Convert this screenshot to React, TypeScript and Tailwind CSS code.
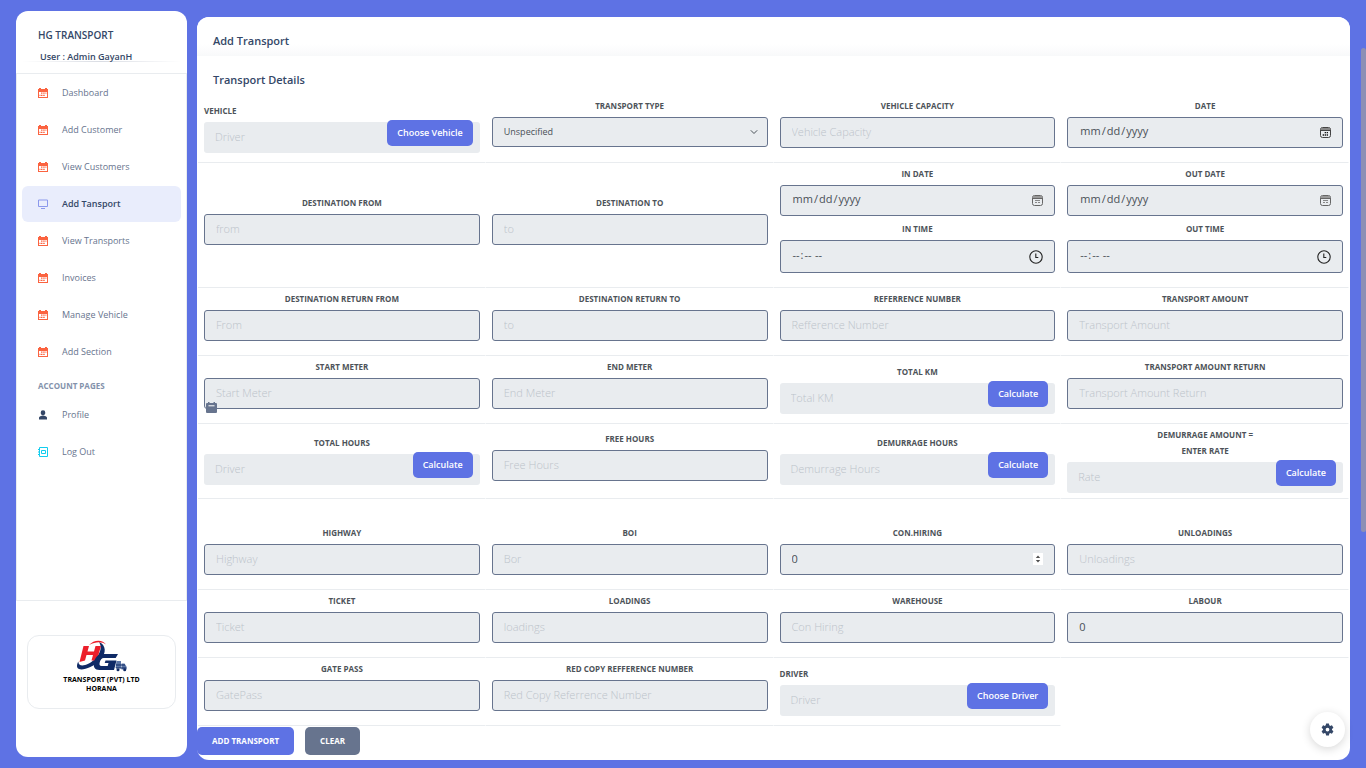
import { useState, type ReactNode } from 'react';

type NavIconName = 'calendar' | 'screen' | 'person' | 'book';

const navItems: { label: string; icon: NavIconName; active?: boolean }[] = [
  { label: 'Dashboard', icon: 'calendar' },
  { label: 'Add Customer', icon: 'calendar' },
  { label: 'View Customers', icon: 'calendar' },
  { label: 'Add Tansport', icon: 'screen', active: true },
  { label: 'View Transports', icon: 'calendar' },
  { label: 'Invoices', icon: 'calendar' },
  { label: 'Manage Vehicle', icon: 'calendar' },
  { label: 'Add Section', icon: 'calendar' },
];

const accountItems: { label: string; icon: NavIconName }[] = [
  { label: 'Profile', icon: 'person' },
  { label: 'Log Out', icon: 'book' },
];

const fieldClass =
  'block w-full rounded-[3px] bg-[#e9ecef] px-[11px] pb-0.5 text-[11px] text-[#495057] placeholder:font-light placeholder:text-[#bcc3ca] outline-none';
const boxClass = 'border border-[#67748e]';

function NavIcon({ name }: { name: NavIconName }) {
  if (name === 'screen') {
    return (
      <svg viewBox="0 0 10 10" className="size-[10px]" fill="none" stroke="#8b98ec">
        <path d="M.5 1h9v6.5h-9z" />
        <path d="M3 9.5h4" />
      </svg>
    );
  }
  if (name === 'person') {
    return (
      <svg viewBox="0 0 10 10" className="size-[10px]" fill="#344767">
        <path d="M5 .3a2.3 2.3 0 0 1 2.3 2.4C7.3 4.2 6.4 5.3 5 5.3S2.7 4.2 2.7 2.7A2.3 2.3 0 0 1 5 .3zM1 9.5V7.8C1 6.5 2.5 6 4 5.7h2c1.5.3 3 .8 3 2.1v1.700z" />
      </svg>
    );
  }
  if (name === 'book') {
    return (
      <svg viewBox="0 0 10 10" className="size-[10px]" fill="none" stroke="#11cdef">
        <path d="M1.5.5h8v9h-8z" />
        <path d="M3.5 3.5h4v3h-4z" />
        <path d="M0 2.5h1.5M0 5h1.5M0 7.5h1.5" />
      </svg>
    );
  }
  return (
    <svg viewBox="0 0 10 10" className="size-[10px]">
      <path d="M0 1h1V0h2v1h4V0h2v1h1v9H0z" fill="#fb6340" />
      <path d="M1 4h8v5H1z" fill="#fff" />
      <path d="M3 4.5h1.5v1.2H3zM5.2 4.5h1.5v1.2H5.2zM7.4 4.5h1v1.2h-1zM1.5 6.8h1v1.2h-1zM3 6.8h1.5v1.2H3zM5.2 6.8h1.5v1.2H5.2z" fill="#fb6340" />
    </svg>
  );
}

function DateIcon({ dark }: { dark?: boolean }) {
  return (
    <svg viewBox="0 0 11 11" className="size-[11px]" fill="none" stroke={dark ? '#444' : '#666'}>
      <rect x=".5" y=".5" width="10" height="10" rx="2" />
      <path d="M1 2h9" stroke={dark ? '#888' : '#999'} strokeWidth="2" />
      <path d="M1 3.5h9" />
      {dark ? (
        <path d="M4.7 5.7h1.2M6.7 5.7h1.2M2.7 8h1.2M4.7 8h1.2M6.7 8h1.2" stroke="#000" strokeWidth="1.3" />
      ) : (
        <path d="M3 5.5h5M3 7.5h2M6 7.5h2" stroke="#888" />
      )}
    </svg>
  );
}

function ClockIcon() {
  return (
    <svg viewBox="0 0 14 14" className="size-[14px]" fill="none" stroke="#222" strokeWidth="1.100">
      <circle cx="7" cy="7" r="6.2" />
      <path d="M6.8 3.5V7.5h2.5" />
    </svg>
  );
}

function Logo() {
  return (
    <svg viewBox="0 0 52 32" className="h-8 w-[52px]">
      <path d="M23 2c7 3 8 11 1 18C17 27.5 7 30.5 3 29c-2.5-1-2.5-4-.7-7.5 0 4.5 4.5 5 10 2.3C21 19.5 28 9.5 23 2z" fill="#0f2a66" />
      <path d="M7.5 6h5.5l-1.5 5.5h6.500L19.500 6H25l-4.2 14.5h-5.3l1.5-5.5h-6.5L9 20.5 3.500 22z" fill="#ec1f2b" />
      <path d="M13 5C18-.8 27-.5 30 4.5c-4-3-10-3.2-17 .5z" fill="#ec1f2b" />
      <path d="M42 14H26c-4 0-7 4-8 8-1 4.5.5 8 5.500 8H38l2.500-9.500H29.500L28.700 23h3.800l-.8 3h-6.200c-2 0-2.300-1.500-1.800-3.500.6-2.500 2-4.500 4-4.500h12z" fill="#0f2a66" />
      <path d="M40.5 21h4.500v7h-5.500zM45.500 23.500h3l2 3v3h-5z" fill="#5c76a6" />
      <path d="M40 25h9M40 28h10.500" stroke="#0f2a66" />
      <circle cx="42" cy="29.7" r="1.5" fill="#0f2a66" />
      <circle cx="48.7" cy="29.7" r="1.5" fill="#0f2a66" />
    </svg>
  );
}

function NavLink({ label, icon, active }: { label: string; icon: NavIconName; active?: boolean }) {
  return (
    <a
      href="#"
      className={
        active
          ? 'flex h-9 items-center gap-[14px] rounded-md bg-[#e9edfc] px-4 text-[9px] font-semibold text-[#344767]'
          : 'flex h-9 items-center gap-[14px] rounded-md px-4 text-[9px] text-[#67748e]'
      }
    >
      <NavIcon name={icon} />
      {label}
    </a>
  );
}

function Row({ children }: { children: ReactNode }) {
  return <div className="grid grid-cols-4">{children}</div>;
}

function Cell({ children }: { children: ReactNode }) {
  return (
    <div className="flex min-w-0 flex-col justify-center border-r border-b border-r-white border-b-[#e9ecef] pt-[3px] pr-[5px] pb-[2px] pl-[6px]">
      {children}
    </div>
  );
}

function Label({ id, left, children }: { id: string; left?: boolean; children: ReactNode }) {
  return (
    <label
      htmlFor={id}
      className={
        left
          ? 'mb-[3px] block text-[8px] leading-4 font-bold text-[#4d5359] uppercase'
          : 'mb-[3px] block text-center text-[8px] leading-4 font-bold text-[#4d5359] uppercase'
      }
    >
      {children}
    </label>
  );
}

function TextField({ id, label, placeholder, value }: { id: string; label: string; placeholder?: string; value?: string }) {
  return (
    <div className="mb-3">
      <Label id={id}>{label}</Label>
      <input id={id} type="text" placeholder={placeholder} defaultValue={value} className={`${fieldClass} ${boxClass} h-[31px]`} />
    </div>
  );
}

function DateField({ id, label, dark, tight }: { id: string; label: string; dark?: boolean; tight?: boolean }) {
  return (
    <div className={tight ? 'mb-[5px]' : 'mb-3'}>
      <Label id={id}>{label}</Label>
      <div className="relative">
        <input
          id={id}
          type="date"
          className={`${fieldClass} ${boxClass} h-[31px] [&::-webkit-calendar-picker-indicator]:opacity-0`}
        />
        <span className="pointer-events-none absolute inset-y-0 right-3 flex items-center">
          <DateIcon dark={dark} />
        </span>
      </div>
    </div>
  );
}

function TimeField({ id, label }: { id: string; label: string }) {
  return (
    <div className="mb-3">
      <Label id={id}>{label}</Label>
      <div className="relative">
        <input
          id={id}
          type="time"
          className={`${fieldClass} ${boxClass} h-[33px] [&::-webkit-calendar-picker-indicator]:opacity-0`}
        />
        <span className="pointer-events-none absolute inset-y-0 right-3 flex items-center">
          <ClockIcon />
        </span>
      </div>
    </div>
  );
}

// Read-only field with an action button sitting over its right end
function ActionField(props: { id: string; label: ReactNode; placeholder: string; action: string; left?: boolean }) {
  const { id, label, placeholder, action, left } = props;
  return (
    <div className="mb-[3px]">
      <Label id={id} left={left}>{label}</Label>
      <div className="relative">
        <input id={id} type="text" readOnly placeholder={placeholder} className={`${fieldClass} h-[31px]`} />
        <button
          type="button"
          className="absolute -top-0.5 right-[7px] h-[26px] rounded-[5px] bg-[#5e72e4] px-[10px] text-[9px] font-semibold text-white"
        >
          {action}
        </button>
      </div>
    </div>
  );
}

export default function App() {
  const [conHiring, setConHiring] = useState('0');

  return (
    <div className="relative flex h-screen gap-[10px] overflow-hidden bg-[#5e72e4] pr-4 pl-4 font-['Open_Sans',sans-serif]">
      {/* Sidebar */}
      <aside className="mt-[11px] mb-[11px] flex w-[171px] shrink-0 flex-col rounded-xl bg-white">
        <div className="h-[62px] px-[22px] pt-4">
          <h1 className="text-[10px] leading-4 font-semibold text-[#344767]">HG TRANSPORT</h1>
          <p className="mt-1.5 pl-0.5 text-[9px] leading-4 font-semibold text-[#344767]">User : Admin GayanH</p>
          <hr className="-mx-4 -mt-1 h-px border-0 bg-linear-to-r from-transparent via-[#d9dce3] to-transparent" />
        </div>
        <nav className="flex flex-1 flex-col border border-[#e9ecef] px-[5px]">
          <div className="flex flex-col gap-px pt-px">
            {navItems.map((item) => (
              <NavLink key={item.label} {...item} />
            ))}
          </div>
          <h2 className="mt-2 mb-[3px] px-4 text-[8px] leading-4 font-bold text-[#8392ab] uppercase">Account pages</h2>
          <div className="flex flex-col gap-px">
            {accountItems.map((item) => (
              <NavLink key={item.label} {...item} />
            ))}
          </div>
        </nav>
        <div className="h-[156px] px-[11px] pt-[34px]">
          <div className="flex h-[74px] flex-col items-center rounded-xl border border-[#e9ecef] pt-1">
            <Logo />
            <p className="pt-[3px] text-center text-[7px] leading-[9px] font-bold text-black">
              TRANSPORT (PVT) LTD
              <br />
              HORANA
            </p>
          </div>
        </div>
      </aside>

      {/* Main card */}
      <main className="mt-[17px] mb-2 min-w-0 flex-1 rounded-xl bg-white">
        <h2 className="h-[39px] rounded-t-xl bg-linear-to-b from-white from-70% to-[#f8f9fa] px-4 pt-4 text-[11px] leading-4 font-semibold text-[#344767]">
          Add Transport
        </h2>
        <h3 className="h-[39px] px-4 pt-4 text-[11px] leading-4 font-semibold text-[#344767]">Transport Details</h3>

        <form className="px-px" onSubmit={(e) => e.preventDefault()}>
          <Row>
            <Cell>
              <ActionField id="vehicle" label="Vehicle" placeholder="Driver" action="Choose Vehicle" left />
            </Cell>
            <Cell>
              <div className="mb-[13px]">
                <Label id="type">Transport Type</Label>
                <div className="relative">
                  <select id="type" className="block h-[30px] w-full appearance-none rounded-[3px] border border-[#67748e] bg-[#e9ecef] px-[11px] text-[9px] text-[#495057] outline-none">
                    <option>Unspecified</option>
                  </select>
                  <svg viewBox="0 0 8 8" className="pointer-events-none absolute top-[11px] right-[10px] size-2" fill="none" stroke="#495057">
                    <path d="M.8 2.3 4 5.5l3.2-3.2" />
                  </svg>
                </div>
              </div>
            </Cell>
            <Cell>
              <TextField id="capacity" label="Vehicle Capacity" placeholder="Vehicle Capacity" />
            </Cell>
            <Cell>
              <DateField id="date" label="Date" dark />
            </Cell>
          </Row>

          <Row>
            <Cell>
              <TextField id="dest-from" label="Destination From" placeholder="from" />
            </Cell>
            <Cell>
              <TextField id="dest-to" label="Destination To" placeholder="to" />
            </Cell>
            <Cell>
              <DateField id="in-date" label="In Date" tight />
              <TimeField id="in-time" label="In Time" />
            </Cell>
            <Cell>
              <DateField id="out-date" label="Out Date" tight />
              <TimeField id="out-time" label="Out Time" />
            </Cell>
          </Row>

          <Row>
            <Cell>
              <TextField id="return-from" label="Destination Return From" placeholder="From" />
            </Cell>
            <Cell>
              <TextField id="return-to" label="Destination Return To" placeholder="to" />
            </Cell>
            <Cell>
              <TextField id="reference" label="Referrence Number" placeholder="Refference Number" />
            </Cell>
            <Cell>
              <TextField id="amount" label="Transport Amount" placeholder="Transport Amount" />
            </Cell>
          </Row>

          <Row>
            <Cell>
              <div className="relative">
                <TextField id="start-meter" label="Start Meter" placeholder="Start Meter" />
                <svg viewBox="0 0 11 11" className="absolute bottom-2 left-0.5 size-[11px]">
                  <path d="M2 0h1.5v1h4V0H9v1h1q1 0 1 1v8q0 1-1 1H1q-1 0-1-1V2q0-1 1-1h1z" fill="#67748e" />
                  <path d="M2.5 3.8h6" stroke="#fff" />
                </svg>
              </div>
            </Cell>
            <Cell>
              <TextField id="end-meter" label="End Meter" placeholder="End Meter" />
            </Cell>
            <Cell>
              <ActionField id="total-km" label="Total KM" placeholder="Total KM" action="Calculate" />
            </Cell>
            <Cell>
              <TextField id="amount-return" label="Transport Amount Return" placeholder="Transport Amount Return" />
            </Cell>
          </Row>

          <Row>
            <Cell>
              <ActionField id="total-hours" label="Total Hours" placeholder="Driver" action="Calculate" />
            </Cell>
            <Cell>
              <TextField id="free-hours" label="Free Hours" placeholder="Free Hours" />
            </Cell>
            <Cell>
              <ActionField id="demurrage-hours" label="Demurrage Hours" placeholder="Demurrage Hours" action="Calculate" />
            </Cell>
            <Cell>
              <ActionField
                id="rate"
                label={<>Demurrage Amount =<br />Enter Rate</>}
                placeholder="Rate"
                action="Calculate"
              />
            </Cell>
          </Row>

          <div className="pt-[23px]">
            <Row>
              <Cell>
                <TextField id="highway" label="Highway" placeholder="Highway" />
              </Cell>
              <Cell>
                <TextField id="boi" label="BOI" placeholder="Bor" />
              </Cell>
              <Cell>
                <div className="mb-3">
                  <Label id="con-hiring">Con.Hiring</Label>
                  <div className="relative">
                    <input
                      id="con-hiring"
                      type="number"
                      value={conHiring}
                      onChange={(e) => setConHiring(e.target.value)}
                      className={`${fieldClass} ${boxClass} h-[31px] [&::-webkit-inner-spin-button]:appearance-none`}
                    />
                    <svg viewBox="0 0 10 12" className="pointer-events-none absolute top-[9px] right-3 h-3 w-[10px]">
                      <path d="M0 0h10v12H0z" fill="#fff" />
                      <path d="M5 2.5 7.2 5H2.8zM5 9.5 7.2 7H2.8z" fill="#505050" />
                    </svg>
                  </div>
                </div>
              </Cell>
              <Cell>
                <TextField id="unloadings" label="Unloadings" placeholder="Unloadings" />
              </Cell>
            </Row>
          </div>

          <Row>
            <Cell>
              <TextField id="ticket" label="Ticket" placeholder="Ticket" />
            </Cell>
            <Cell>
              <TextField id="loadings" label="Loadings" placeholder="loadings" />
            </Cell>
            <Cell>
              <TextField id="warehouse" label="Warehouse" placeholder="Con Hiring" />
            </Cell>
            <Cell>
              <TextField id="labour" label="Labour" value="0" />
            </Cell>
          </Row>

          <Row>
            <Cell>
              <TextField id="gate-pass" label="Gate Pass" placeholder="GatePass" />
            </Cell>
            <Cell>
              <TextField id="red-copy" label="Red Copy Refference Number" placeholder="Red Copy Referrence Number" />
            </Cell>
            <Cell>
              <ActionField id="driver" label="Driver" placeholder="Driver" action="Choose Driver" left />
            </Cell>
          </Row>

          <div className="-ml-px flex gap-[11px] pt-px">
            <button type="submit" className="h-7 rounded-[5px] bg-[#5e72e4] px-[15px] text-[8px] font-bold text-white uppercase">
              Add Transport
            </button>
            <button type="reset" className="h-7 rounded-[5px] bg-[#67748e] px-[15px] text-[8px] font-bold text-white uppercase">
              Clear
            </button>
          </div>
        </form>
      </main>

      {/* Scroll thumb */}
      <div className="absolute top-12 right-0 h-[484px] w-[5px] rounded-sm bg-[#8c8fb5]" />

      {/* Settings */}
      <button
        type="button"
        aria-label="Settings"
        className="absolute right-[21px] bottom-[21px] flex size-[35px] items-center justify-center rounded-full bg-white shadow-[0_2px_10px_rgba(0,0,0,0.16)]"
      >
        <svg viewBox="0 0 24 24" className="size-[15px]" fill="#344767">
          <path d="M19.14 12.94c.04-.3.06-.61.06-.94 0-.32-.02-.64-.07-.94l2.03-1.58a.49.49 0 0 0 .12-.61l-1.92-3.32a.49.49 0 0 0-.59-.22l-2.39.96a7 7 0 0 0-1.62-.94l-.36-2.54a.48.48 0 0 0-.48-.41h-3.84a.47.47 0 0 0-.47.41l-.36 2.54c-.59.24-1.13.57-1.62.94l-2.39-.96a.47.47 0 0 0-.59.22L2.74 8.87a.47.47 0 0 0 .12.61l2.03 1.58a6 6 0 0 0 0 1.88l-2.03 1.58a.49.49 0 0 0-.12.61l1.92 3.32c.12.22.37.29.59.22l2.39-.96c.5.38 1.03.7 1.62.94l.36 2.54c.05.24.24.41.48.41h3.84c.24 0 .44-.17.47-.41l.36-2.54c.59-.24 1.13-.56 1.62-.94l2.39.96c.22.08.47 0 .59-.22l1.92-3.32a.47.47 0 0 0-.12-.61zM12 15a3 3 0 1 1 0-6 3 3 0 0 1 0 6z" />
        </svg>
      </button>
    </div>
  );
}
